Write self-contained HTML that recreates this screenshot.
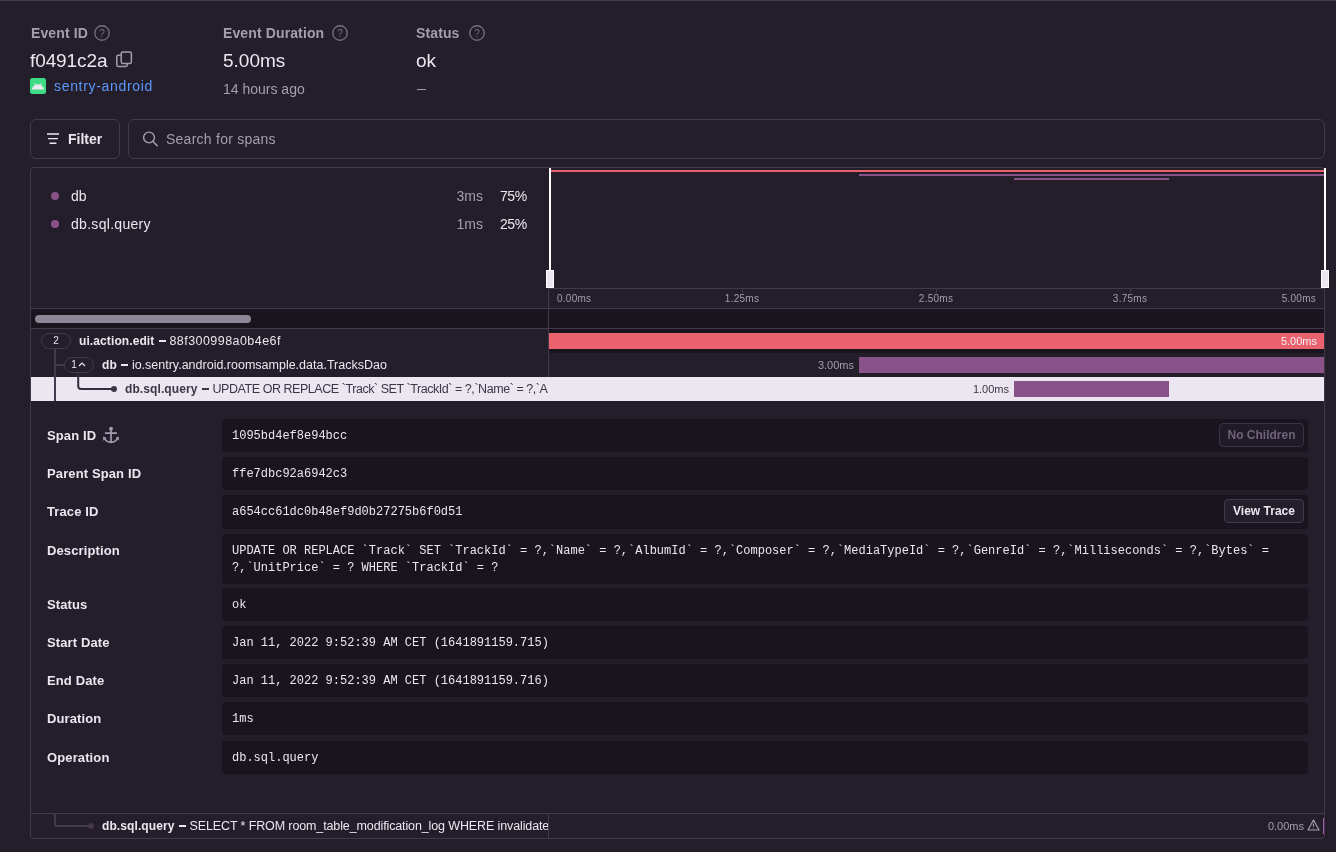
<!DOCTYPE html>
<html><head><meta charset="utf-8">
<style>
*{box-sizing:border-box;margin:0;padding:0}
body{will-change:transform}
html,body{width:1336px;height:852px;overflow:hidden;background:#241d2a;font-family:"Liberation Sans",sans-serif;color:#ebe6ef}
.abs{position:absolute}
.topline{position:absolute;left:0;top:0;width:1336px;height:1px;background:#43384c}
.lbl{position:absolute;font-weight:bold;font-size:14px;color:#a69db1;line-height:16px;white-space:nowrap;letter-spacing:0.12px}
.val{position:absolute;font-size:19px;line-height:20px;white-space:nowrap}
.sub{position:absolute;font-size:14px;line-height:16px;color:#a69db1;white-space:nowrap}
.q{position:absolute;width:16px;height:16px}
.btn{position:absolute;border:1px solid #43384c;border-radius:6px;background:#241d2a}
.panel{position:absolute;left:30px;top:167px;width:1295px;height:672px;border:1px solid #43384c;border-radius:4px;overflow:hidden}
.mono{font-family:"Liberation Mono",monospace}
.txt{position:absolute;white-space:nowrap}
.dl{font-size:13px;font-weight:bold;line-height:17px;color:#ebe6ef;letter-spacing:0.12px}
.code{background:#1a141f;border-radius:4px}
.ct{position:absolute;left:10px;top:8.5px;font-size:12px;line-height:17px;color:#ebe6ef;white-space:nowrap}
.sbtn{border:1px solid #43384c;border-radius:4px;font-size:12px;font-weight:bold;line-height:22px;text-align:center;white-space:nowrap;color:#ebe6ef}
.axis{font-size:10px;line-height:12px;color:#a69db1;letter-spacing:0.25px}
.sp{font-size:11px;line-height:12px}
.rt{font-size:12.5px;line-height:16px;color:#ebe6ef}
.rt b{font-size:12px;letter-spacing:0.1px}
.dash{display:inline-block;width:7px;height:2px;background:currentColor;vertical-align:3px;margin:0 3.5px 0 4.5px}
.pill{height:16px;border:1px solid #43384c;border-radius:8px;background:#241d2a;font-size:10px;line-height:14px;text-align:center;color:#ebe6ef}
</style></head><body>
<div class="topline"></div>

<!-- header -->
<div class="lbl" style="left:31px;top:25px">Event ID</div>
<svg class="q" style="left:94px;top:25px" viewBox="0 0 16 16"><circle cx="8" cy="8" r="7.25" fill="none" stroke="#787080" stroke-width="1.3"/><text x="8" y="12" font-size="10" text-anchor="middle" fill="#787080" font-family="Liberation Sans">?</text></svg>
<div class="val" style="left:30px;top:51px;letter-spacing:-0.1px">f0491c2a</div>
<svg class="abs" style="left:116px;top:51px" width="17" height="17" viewBox="0 0 17 17"><rect x="5.2" y="1" width="10.2" height="11.4" rx="1.6" fill="none" stroke="#a69db1" stroke-width="1.5"/><path d="M4.6 4.25 H2.4 A1.6 1.6 0 0 0 0.8 5.85 V13.9 A1.6 1.6 0 0 0 2.4 15.5 H9.6 A1.6 1.6 0 0 0 11.2 13.9 V12.4" fill="none" stroke="#a69db1" stroke-width="1.5"/></svg>
<svg class="abs" style="left:30px;top:78px" width="16" height="16" viewBox="0 0 16 16"><rect width="16" height="16" rx="2.5" fill="#3ddc84"/><path d="M1.6 11.6 C2.6 8.2 5 6.2 8 6.2 C11 6.2 13.4 8.2 14.2 11.6 Z" fill="#ebe6ef"/><path d="M4.6 5 L5.4 6.8 M11.4 5 L10.6 6.8" stroke="#ebe6ef" stroke-width="0.9"/></svg>
<div class="txt" style="left:54px;top:78px;font-size:14px;line-height:16px;color:#5c97fa;letter-spacing:0.68px">sentry-android</div>

<div class="lbl" style="left:223px;top:25px">Event Duration</div>
<svg class="q" style="left:332px;top:25px" viewBox="0 0 16 16"><circle cx="8" cy="8" r="7.25" fill="none" stroke="#787080" stroke-width="1.3"/><text x="8" y="12" font-size="10" text-anchor="middle" fill="#787080" font-family="Liberation Sans">?</text></svg>
<div class="val" style="left:223px;top:51px">5.00ms</div>
<div class="sub" style="left:223px;top:81px">14 hours ago</div>

<div class="lbl" style="left:416px;top:25px">Status</div>
<svg class="q" style="left:469px;top:25px" viewBox="0 0 16 16"><circle cx="8" cy="8" r="7.25" fill="none" stroke="#787080" stroke-width="1.3"/><text x="8" y="12" font-size="10" text-anchor="middle" fill="#787080" font-family="Liberation Sans">?</text></svg>
<div class="val" style="left:416px;top:51px">ok</div>
<div class="abs" style="left:417px;top:89px;width:9px;height:1px;background:#a69db1"></div>

<!-- filter bar -->
<div class="btn" style="left:30px;top:119px;width:90px;height:40px"></div>
<svg class="abs" style="left:47px;top:133px" width="13" height="12" viewBox="0 0 13 12"><path d="M0 1 H12 M1 5.6 H11 M2.6 10.2 H9.4" stroke="#ebe6ef" stroke-width="1.4"/></svg>
<div class="txt" style="left:68px;top:131px;font-size:14px;font-weight:bold;line-height:16px">Filter</div>
<div class="btn" style="left:128px;top:119px;width:1197px;height:40px"></div>
<svg class="abs" style="left:142px;top:131px" width="16" height="16" viewBox="0 0 16 16"><circle cx="7" cy="6.5" r="5.4" fill="none" stroke="#a69db1" stroke-width="1.4"/><path d="M11 10.5 L15.6 15.2" stroke="#a69db1" stroke-width="1.5"/></svg>
<div class="txt" style="left:166px;top:131px;font-size:14px;line-height:16px;color:#a69db1;letter-spacing:0.25px">Search for spans</div>

<!-- panel -->
<div class="panel"></div>
<!-- legend -->
<div class="abs" style="left:51px;top:192px;width:8px;height:8px;border-radius:50%;background:#895289"></div>
<div class="txt" style="left:71px;top:188px;font-size:14px;line-height:16px">db</div>
<div class="txt" style="right:853px;top:188px;font-size:14px;line-height:16px;color:#a69db1">3ms</div>
<div class="txt" style="right:809px;top:188px;font-size:14px;line-height:16px;letter-spacing:-0.3px">75%</div>
<div class="abs" style="left:51px;top:220px;width:8px;height:8px;border-radius:50%;background:#895289"></div>
<div class="txt" style="left:71px;top:216px;font-size:14px;line-height:16px;letter-spacing:0.3px">db.sql.query</div>
<div class="txt" style="right:853px;top:216px;font-size:14px;line-height:16px;color:#a69db1">1ms</div>
<div class="txt" style="right:809px;top:216px;font-size:14px;line-height:16px;letter-spacing:-0.3px">25%</div>
<!-- minimap -->
<div class="abs" style="left:551px;top:170px;width:773px;height:2px;background:#e9626e"></div>
<div class="abs" style="left:859px;top:174px;width:465px;height:2px;background:#895289"></div>
<div class="abs" style="left:1014px;top:178px;width:155px;height:2px;background:#895289"></div>
<div class="abs" style="left:549px;top:168px;width:2px;height:104px;background:#fff"></div>
<div class="abs" style="left:1324px;top:168px;width:2px;height:104px;background:#fff"></div>
<div class="abs" style="left:546px;top:270px;width:8px;height:18px;background:#ebe6ef;border:1px solid #fff"></div>
<div class="abs" style="left:1321px;top:270px;width:8px;height:18px;background:#ebe6ef;border:1px solid #fff"></div>
<div class="abs" style="left:548px;top:288px;width:776px;height:1px;background:#43384c"></div>
<div class="abs" style="left:548px;top:289px;width:1px;height:112px;background:#43384c"></div>
<div class="abs" style="left:548px;top:814px;width:1px;height:24px;background:#43384c"></div>
<!-- axis -->
<div class="abs" style="left:742px;top:289px;width:1px;height:4px;background:#43384c"></div>
<div class="abs" style="left:936px;top:289px;width:1px;height:4px;background:#43384c"></div>
<div class="abs" style="left:1130px;top:289px;width:1px;height:4px;background:#43384c"></div>
<div class="txt axis" style="left:557px;top:293px">0.00ms</div>
<div class="txt axis" style="left:742px;top:293px;transform:translateX(-50%)">1.25ms</div>
<div class="txt axis" style="left:936px;top:293px;transform:translateX(-50%)">2.50ms</div>
<div class="txt axis" style="left:1130px;top:293px;transform:translateX(-50%)">3.75ms</div>
<div class="txt axis" style="right:20px;top:293px">5.00ms</div>
<div class="abs" style="left:31px;top:308px;width:1293px;height:1px;background:#43384c"></div>
<div class="abs" style="left:31px;top:309px;width:1293px;height:19px;background:#1a141f"></div>
<div class="abs" style="left:548px;top:309px;width:1px;height:19px;background:#43384c"></div>
<div class="abs" style="left:35px;top:315px;width:216px;height:8px;border-radius:4px;background:#8e8596"></div>
<div class="abs" style="left:31px;top:328px;width:1293px;height:1px;background:#43384c"></div>
<!-- rows -->
<div class="abs" style="left:549px;top:329px;width:775px;height:24px;background:#1a141f"></div>
<div class="abs" style="left:549px;top:333px;width:775px;height:16px;background:#e9626e"></div>
<div class="txt sp" style="right:19px;top:335px;color:#f3eef5">5.00ms</div>
<div class="abs pill" style="left:41px;top:333px;width:30px">2</div>
<div class="txt rt" style="left:79px;top:333px"><b>ui.action.edit</b><i class="dash"></i><span style="letter-spacing:0.45px">88f300998a0b4e6f</span></div>

<div class="abs" style="left:54px;top:349px;width:2px;height:52px;background:#43384c"></div>
<div class="abs" style="left:56px;top:364px;width:9px;height:2px;background:#43384c"></div>
<div class="abs pill" style="left:64px;top:357px;width:30px;padding-right:10px">1</div>
<svg class="abs" style="left:78px;top:361px" width="8" height="6" viewBox="0 0 8 6"><path d="M1 5 L4 2 L7 5" fill="none" stroke="#ebe6ef" stroke-width="1.2"/></svg>
<div class="txt rt" style="left:102px;top:357px"><b>db</b><i class="dash"></i>io.sentry.android.roomsample.data.TracksDao</div>
<div class="abs" style="left:859px;top:357px;width:465px;height:16px;background:#895289"></div>
<div class="txt sp" style="right:482px;top:359px;color:#a69db1">3.00ms</div>

<div class="abs" style="left:31px;top:377px;width:1293px;height:24px;background:#ebe6ef"></div>
<div class="abs" style="left:54px;top:377px;width:2px;height:24px;background:#43384c"></div>
<svg class="abs" style="left:76px;top:373px" width="42" height="22" viewBox="0 0 42 22"><path d="M2.2 0 V13 A3 3 0 0 0 5.2 16 H38" fill="none" stroke="#352c3f" stroke-width="2"/><circle cx="38" cy="16" r="3" fill="#3e3446"/></svg>
<div class="txt rt" style="left:125px;top:381px;color:#3e3446;width:423px;overflow:hidden"><b>db.sql.query</b><i class="dash"></i><span style="letter-spacing:-0.45px">UPDATE OR REPLACE `Track` SET `TrackId` = ?,`Name` = ?,`AlbumId` = ?,`Composer` = ?</span></div>
<div class="abs" style="left:1014px;top:381px;width:155px;height:16px;background:#895289"></div>
<div class="txt sp" style="right:327px;top:383px;color:#3e3446">1.00ms</div>

<!-- details -->
<div class="txt dl" style="left:47px;top:427px">Span ID</div>
<div class="abs code" style="left:222px;top:419px;width:1086px;height:33px"><div class="mono ct">1095bd4ef8e94bcc</div></div>
<div class="txt dl" style="left:47px;top:465px">Parent Span ID</div>
<div class="abs code" style="left:222px;top:457px;width:1086px;height:33px"><div class="mono ct">ffe7dbc92a6942c3</div></div>
<div class="txt dl" style="left:47px;top:503px">Trace ID</div>
<div class="abs code" style="left:222px;top:495px;width:1086px;height:34px"><div class="mono ct">a654cc61dc0b48ef9d0b27275b6f0d51</div></div>
<div class="txt dl" style="left:47px;top:542px">Description</div>
<div class="abs code" style="left:222px;top:534px;width:1086px;height:50px"><div class="mono ct">UPDATE OR REPLACE `Track` SET `TrackId` = ?,`Name` = ?,`AlbumId` = ?,`Composer` = ?,`MediaTypeId` = ?,`GenreId` = ?,`Milliseconds` = ?,`Bytes` =<br>?,`UnitPrice` = ? WHERE `TrackId` = ?</div></div>
<div class="txt dl" style="left:47px;top:596px">Status</div>
<div class="abs code" style="left:222px;top:588px;width:1086px;height:33px"><div class="mono ct">ok</div></div>
<div class="txt dl" style="left:47px;top:634px">Start Date</div>
<div class="abs code" style="left:222px;top:626px;width:1086px;height:33px"><div class="mono ct">Jan 11, 2022 9:52:39 AM CET (1641891159.715)</div></div>
<div class="txt dl" style="left:47px;top:672px">End Date</div>
<div class="abs code" style="left:222px;top:664px;width:1086px;height:33px"><div class="mono ct">Jan 11, 2022 9:52:39 AM CET (1641891159.716)</div></div>
<div class="txt dl" style="left:47px;top:710px">Duration</div>
<div class="abs code" style="left:222px;top:702px;width:1086px;height:33px"><div class="mono ct">1ms</div></div>
<div class="txt dl" style="left:47px;top:749px">Operation</div>
<div class="abs code" style="left:222px;top:741px;width:1086px;height:33px"><div class="mono ct">db.sql.query</div></div>
<svg class="abs" style="left:100px;top:424px" width="22" height="22" viewBox="0 0 22 22"><circle cx="11" cy="4.7" r="1.9" fill="#a59bb0"/><path d="M5 9.2 H17 M11 5 V18 M4.3 13.8 Q6 18.3 11 18.3 Q16 18.3 17.7 13.8" fill="none" stroke="#a59bb0" stroke-width="1.7"/><path d="M3 12.6 L6.3 13.8 L3.3 16.8 Z M19 12.6 L15.7 13.8 L18.7 16.8 Z" fill="#a59bb0"/></svg>
<div class="abs sbtn" style="left:1219px;top:423px;width:85px;height:24px;color:#6e6378;background:#201a26;border-color:#3b3245">No Children</div>
<div class="abs sbtn" style="left:1224px;top:499px;width:80px;height:24px;background:#241d2a">View Trace</div>
<!-- last row -->
<div class="abs" style="left:31px;top:813px;width:1293px;height:1px;background:#43384c"></div>
<svg class="abs" style="left:53px;top:814px" width="42" height="16" viewBox="0 0 42 16"><path d="M2 0 V10.5 A1.5 1.5 0 0 0 3.5 12 H38" fill="none" stroke="#43384c" stroke-width="2"/><circle cx="38" cy="12" r="3" fill="#43384c"/></svg>
<div class="txt rt" style="left:102px;top:818px;width:446px;overflow:hidden"><b>db.sql.query</b><i class="dash"></i><span style="letter-spacing:-0.12px">SELECT * FROM room_table_modification_log WHERE invalidated = 1</span></div>
<div class="txt sp" style="right:32px;top:820px;color:#a69db1">0.00ms</div>
<svg class="abs" style="left:1307px;top:819px" width="13" height="12" viewBox="0 0 13 12"><path d="M6.5 1 L12 11 H1 Z" fill="none" stroke="#a69db1" stroke-width="1.2" stroke-linejoin="round"/><path d="M6.5 4.5 V7.5 M6.5 8.8 V9.6" stroke="#a69db1" stroke-width="1.2"/></svg>
<div class="abs" style="left:1323px;top:818px;width:1px;height:16px;background:#a35bb0"></div>
</body></html>
